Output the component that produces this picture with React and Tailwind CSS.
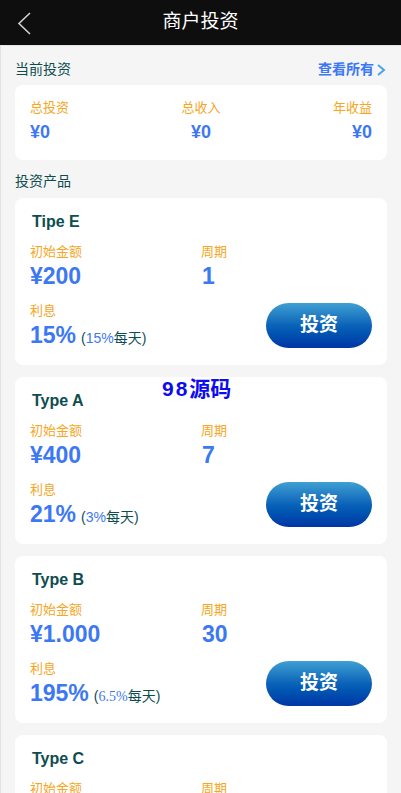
import React from 'react';

const font = { fontFamily: '"Liberation Sans", "Noto Sans CJK SC", sans-serif' };

const products = [
  { name: 'Tipe E', amount: '¥200', period: '1', rate: '15%', daily: '15%' },
  { name: 'Type A', amount: '¥400', period: '7', rate: '21%', daily: '3%' },
  { name: 'Type B', amount: '¥1.000', period: '30', rate: '195%', daily: '6.5%', serif: true },
  { name: 'Type C', amount: '¥3.000', period: '60', rate: '480%', daily: '8%' },
];

function ProductCard({ p }) {
  return (
    <div className="bg-white rounded-[8px] pt-[14px] px-[15px] pb-[16px] mb-[12px]">
      <div className="text-[16px] leading-[20px] font-bold text-[#0e4d4f] pl-[2px]">{p.name}</div>
      <div className="grid grid-cols-2 mt-[11px]">
        <div>
          <div className="text-[13px] leading-[18px] text-[#f5a623]">初始金额</div>
          <div className="text-[23px] leading-[28px] h-[28px] font-bold text-[#3d78f4] mt-[1px]">{p.amount}</div>
        </div>
        <div>
          <div className="text-[13px] leading-[18px] text-[#f5a623]">周期</div>
          <div className="text-[23px] leading-[28px] h-[28px] font-bold text-[#3d78f4] pl-[1px] mt-[1px]">{p.period}</div>
        </div>
      </div>
      <div className="flex items-center justify-between mt-[12px]">
        <div>
          <div className="text-[13px] leading-[18px] text-[#f5a623]">利息</div>
          <div className="flex items-baseline h-[28px] leading-[28px] text-[#3d78f4] mt-[1px]">
            <span className="text-[23px] font-bold">{p.rate}</span>
            <span className="text-[14px] text-[#0e4d4f] ml-[5px]">
              (
              <span
                className="text-[#3d78f4]"
                style={p.serif ? { fontFamily: '"Liberation Serif", serif' } : undefined}
              >
                {p.daily}
              </span>
              每天)
            </span>
          </div>
        </div>
        <button className="w-[106px] h-[45px] rounded-full bg-gradient-to-b from-[#3fa0d2] via-[#0a63b8] to-[#0035a5] text-white text-[19px] font-bold">
          投资
        </button>
      </div>
    </div>
  );
}

export default function App() {
  return (
    <div className="relative min-h-screen bg-[#f5f5f5]" style={font}>
      <header className="relative h-[46px] bg-[#0e0e0e] flex items-center justify-center border-b border-[#e6e6e6]">
        <svg className="absolute left-[14px] top-[10px]" width="22" height="26" viewBox="0 0 22 26">
          <polyline points="16,3 5,13.5 16,24" fill="none" stroke="#d0d0d0" strokeWidth="1.6" />
        </svg>
        <h1 className="text-[19px] text-white">商户投资</h1>
      </header>

      <main className="px-[14px] border-l border-[#e2e2e2]">
        <div className="flex items-center justify-between h-[39px] pt-[8px]">
          <span className="text-[14px] text-[#0e4d4f]">当前投资</span>
          <span className="flex items-center text-[14px] font-bold text-[#3d78f4]">
            查看所有
            <svg width="12" height="14" viewBox="0 0 12 14" className="ml-[1px]">
              <polyline points="3,2 9,7 3,12" fill="none" stroke="#48a4e6" strokeWidth="2" />
            </svg>
          </span>
        </div>

        <div className="bg-white rounded-[8px] pt-[14px] px-[15px] pb-[16px] flex justify-between">
          <div>
            <div className="text-[13px] leading-[18px] text-[#f5a623]">总投资</div>
            <div className="text-[18px] leading-[24px] font-bold text-[#3d78f4] mt-[3px]">¥0</div>
          </div>
          <div className="text-center">
            <div className="text-[13px] leading-[18px] text-[#f5a623]">总收入</div>
            <div className="text-[18px] leading-[24px] font-bold text-[#3d78f4] mt-[3px]">¥0</div>
          </div>
          <div className="text-right">
            <div className="text-[13px] leading-[18px] text-[#f5a623]">年收益</div>
            <div className="text-[18px] leading-[24px] font-bold text-[#3d78f4] mt-[3px]">¥0</div>
          </div>
        </div>

        <div className="h-[38px] flex items-center pt-[4px] text-[14px] text-[#0e4d4f]">投资产品</div>

        {products.map((p) => (
          <ProductCard key={p.name} p={p} />
        ))}
      </main>

      <div className="absolute left-[162px] top-[373px] text-[21px] font-bold text-[#0c0cf0]">
        <span className="tracking-[2px]">98</span>源码
      </div>
    </div>
  );
}
